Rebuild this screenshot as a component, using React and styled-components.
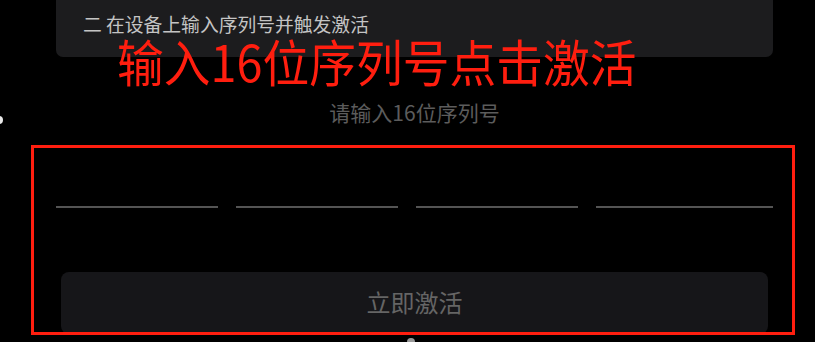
import React from "react";
import styled, { createGlobalStyle } from "styled-components";

const GlobalStyle = createGlobalStyle`
  html, body {
    margin: 0;
    padding: 0;
    background: #000;
  }
  body {
    font-family: "Noto Sans CJK SC", "Noto Sans", sans-serif;
  }
`;

const Page = styled.div`
  position: relative;
  display: flex;
  flex-direction: column;
  width: 815px;
  height: 342px;
  overflow: hidden;
  background: #000;
`;

const StepCard = styled.div`
  box-sizing: border-box;
  height: 57px;
  margin: 0 42px 0 56px;
  padding: 13px 0 0 27px;
  background: #1c1c1e;
  border-radius: 0 0 7px 7px;
`;

const StepText = styled.div`
  color: #c4c4c4;
  font-size: 18.8px;
  line-height: 22px;
  white-space: pre;
`;

const Form = styled.div`
  display: flex;
  flex-direction: column;
  padding: 42px 42px 0 56px;
`;

const Hint = styled.div`
  text-align: center;
  color: #5c5c5c;
  font-size: 21px;
  line-height: 26px;
`;

const InputRow = styled.div`
  display: grid;
  grid-template-columns: repeat(3, 162px) 1fr;
  gap: 18px;
  margin-top: 43px;
`;

const CodeInput = styled.input`
  box-sizing: border-box;
  width: 100%;
  height: 40px;
  padding: 0;
  background: transparent;
  border: none;
  border-bottom: 2px solid #545454;
  outline: none;
  color: #ddd;
  font-size: 20px;
  text-align: center;
  font-family: inherit;
`;

const ActivateButton = styled.button`
  box-sizing: border-box;
  height: 62px;
  margin: 64px 5px 0 5px;
  border: none;
  border-radius: 8px;
  background: #161619;
  color: #656565;
  font-family: inherit;
  font-size: 24px;
  line-height: 60px;
  padding: 0 0 2px;
`;

const Annotation = styled.div`
  position: absolute;
  left: 117px;
  top: 35px;
  color: #ff1e0f;
  font-size: 50px;
  line-height: 50px;
  white-space: nowrap;
  transform: scaleX(0.935);
  transform-origin: left center;
  pointer-events: none;
`;

const Highlight = styled.div`
  position: absolute;
  left: 31px;
  top: 145px;
  width: 764px;
  height: 190px;
  box-sizing: border-box;
  border: 3.5px solid #ff1e0f;
  pointer-events: none;
`;

const EdgeDot = styled.div`
  position: absolute;
  left: ${({ $left }) => $left}px;
  top: ${({ $top }) => $top}px;
  width: 8px;
  height: 8px;
  border-radius: 50%;
  background: ${({ $color }) => $color};
`;

const App = () => {
  return (
    <>
      <GlobalStyle />
      <Page>
        <StepCard>
          <StepText>二 在设备上输入序列号并触发激活</StepText>
        </StepCard>
        <Form>
          <Hint>请输入16位序列号</Hint>
          <InputRow>
            <CodeInput maxLength={4} />
            <CodeInput maxLength={4} />
            <CodeInput maxLength={4} />
            <CodeInput maxLength={4} />
          </InputRow>
          <ActivateButton>立即激活</ActivateButton>
        </Form>

        <Annotation>输入16位序列号点击激活</Annotation>
        <Highlight />
        <EdgeDot $left={-5} $top={116} $color="#e8e8e8" />
        <EdgeDot $left={407} $top={338} $color="#9a9a9a" />
      </Page>
    </>
  );
};

export default App;
